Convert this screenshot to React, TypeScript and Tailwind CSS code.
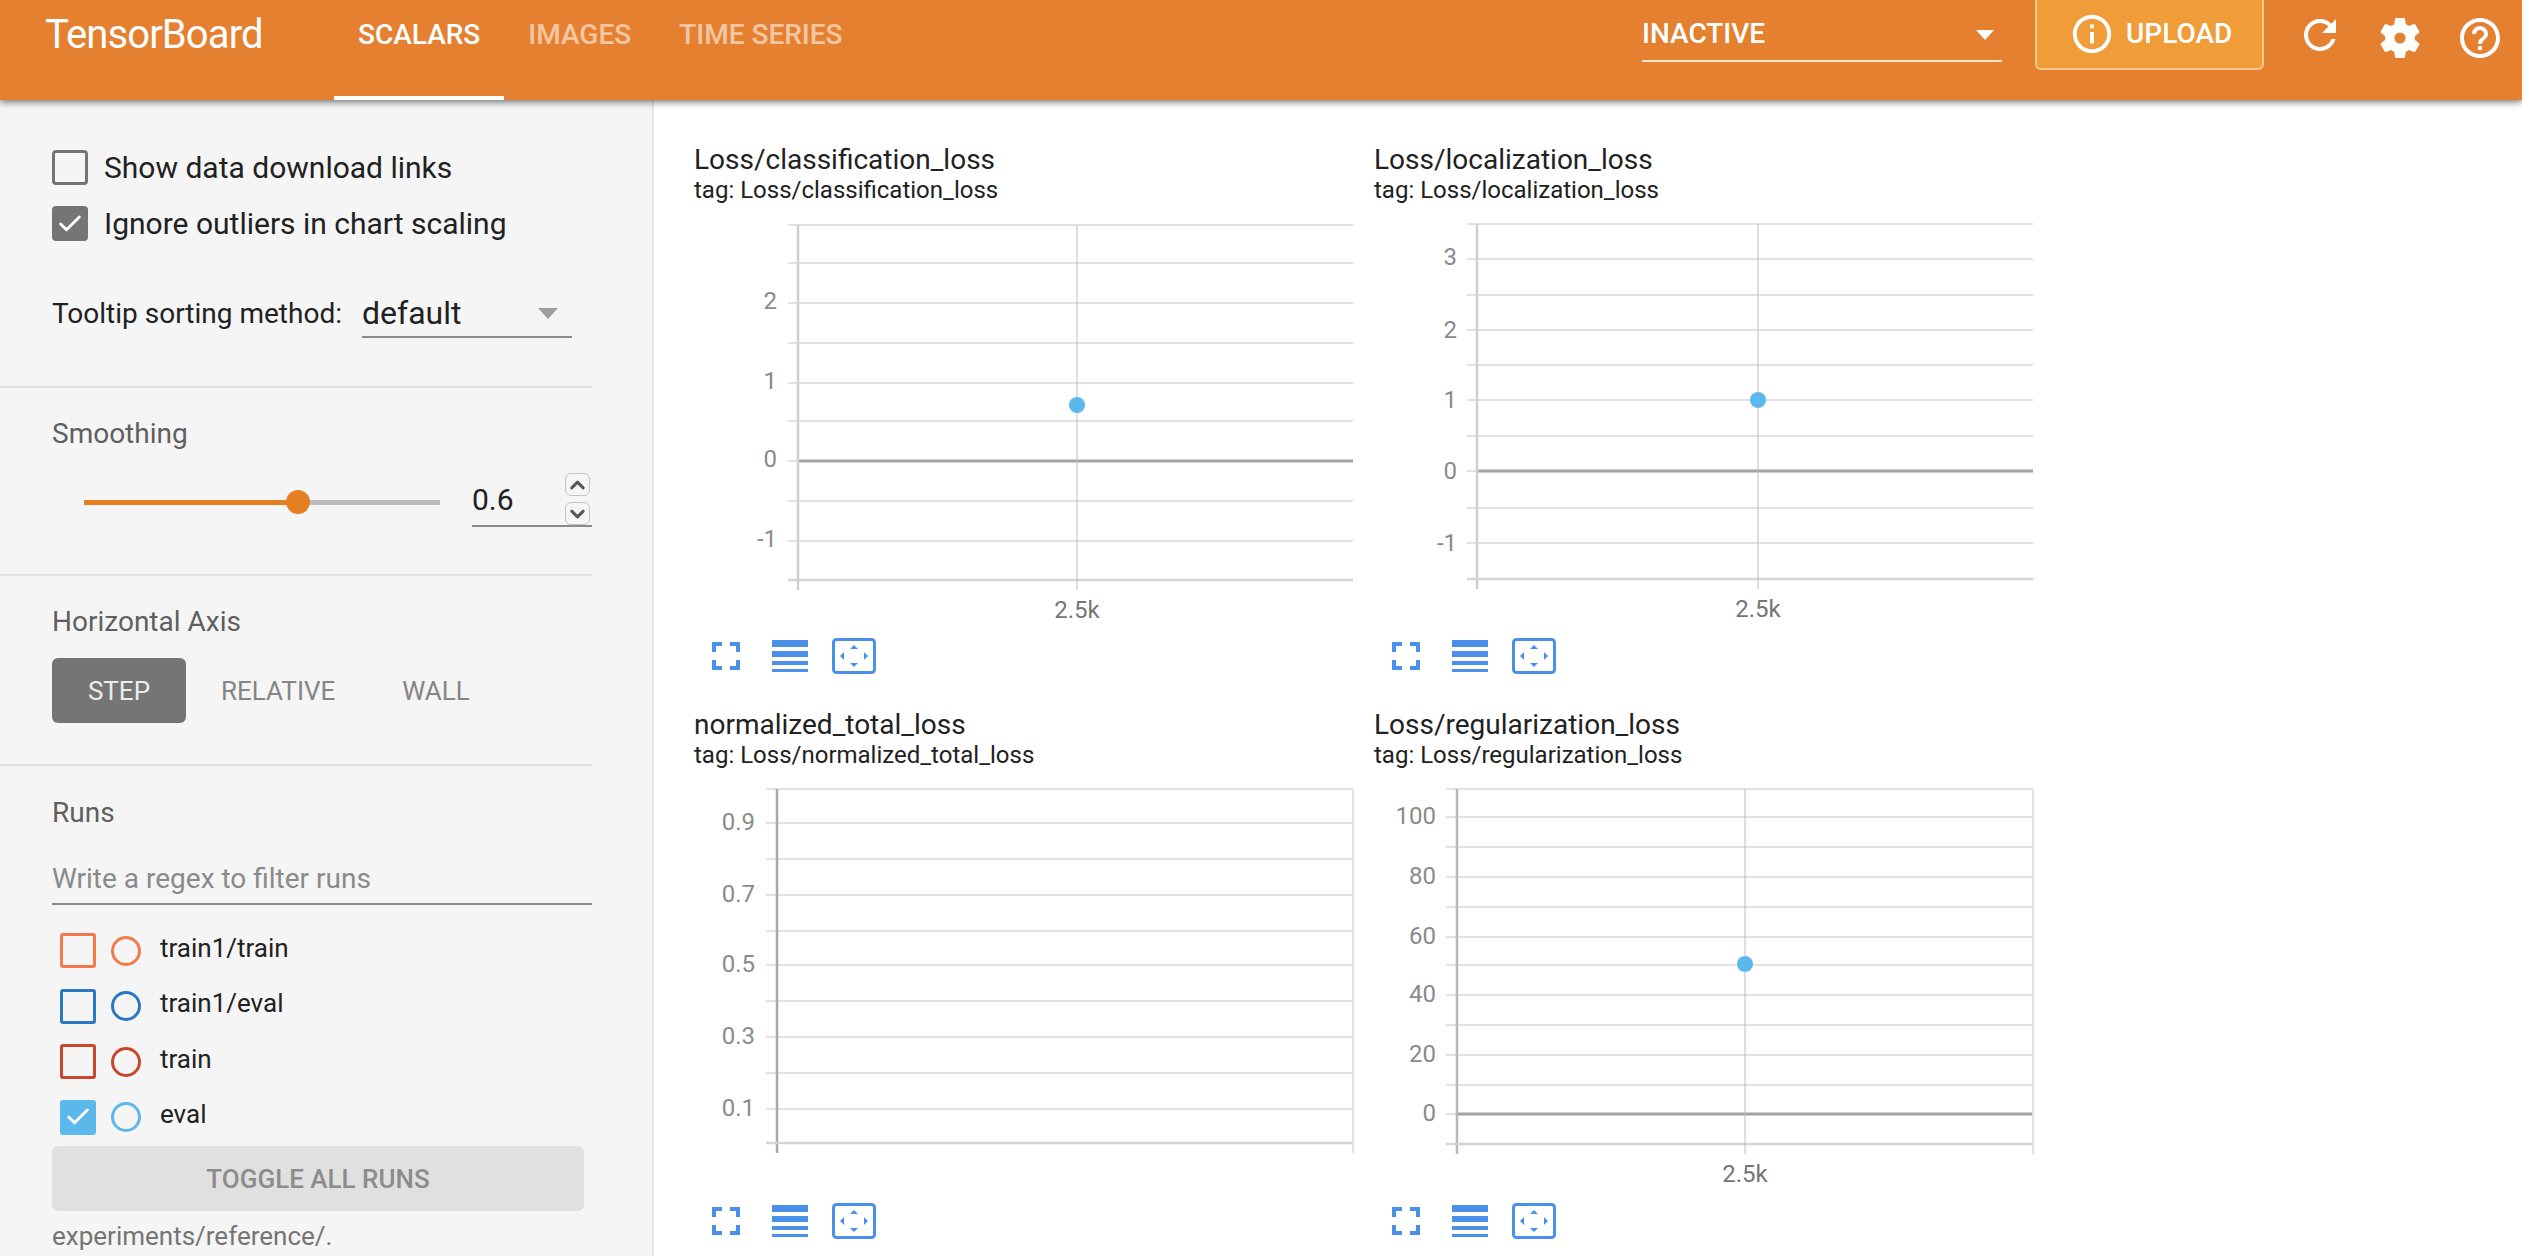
import { Check, ChevronDown, ChevronUp } from 'lucide-react'

const tabs = [
  { label: 'SCALARS', active: true },
  { label: 'IMAGES', active: false },
  { label: 'TIME SERIES', active: false },
]

const runs = [
  { name: 'train1/train', color: 'border-[#f4794b]', checked: false },
  { name: 'train1/eval', color: 'border-[#2a78c2]', checked: false },
  { name: 'train', color: 'border-[#c9462c]', checked: false },
  { name: 'eval', color: 'border-[#5bb8ea]', checked: true },
]

const charts = [
  {
    title: 'Loss/classification_loss',
    tag: 'tag: Loss/classification_loss',
    axis: 104,
    tick: 94,
    labelX: 83,
    labelOffset: 6,
    grid: [19, 57, 97, 137, 177, 215, 255, 295, 335, 374],
    zero: 255,
    labels: [['2', 97], ['1', 177], ['0', 255], ['-1', 335]],
    point: { x: 383, y: 199 },
    axisColor: '#cfcfcf',
    rightEdge: false,
  },
  {
    title: 'Loss/localization_loss',
    tag: 'tag: Loss/localization_loss',
    axis: 103,
    tick: 93,
    labelX: 83,
    labelOffset: 8,
    grid: [18, 53, 89, 124, 159, 194, 230, 265, 302, 337, 373],
    zero: 265,
    labels: [['3', 51], ['2', 124], ['1', 194], ['0', 265], ['-1', 337]],
    point: { x: 384, y: 194 },
    axisColor: '#cfcfcf',
    rightEdge: false,
  },
  {
    title: 'normalized_total_loss',
    tag: 'tag: Loss/normalized_total_loss',
    axis: 83,
    tick: 72,
    labelX: 61,
    labelOffset: 7,
    grid: [18, 52, 88, 124, 160, 194, 230, 266, 302, 338, 372],
    zero: null,
    labels: [['0.9', 52], ['0.7', 124], ['0.5', 194], ['0.3', 266], ['0.1', 338]],
    point: null,
    axisColor: '#a8a8a8',
    rightEdge: true,
  },
  {
    title: 'Loss/regularization_loss',
    tag: 'tag: Loss/regularization_loss',
    axis: 83,
    tick: 72,
    labelX: 62,
    labelOffset: 7,
    grid: [18, 46, 76, 106, 136, 166, 194, 224, 254, 284, 314, 343, 373],
    zero: 343,
    labels: [['100', 46], ['80', 106], ['60', 166], ['40', 224], ['20', 284], ['0', 343]],
    point: { x: 371, y: 193 },
    axisColor: '#b8b8b8',
    rightEdge: true,
  },
]

function MaterialIcon({ d, className, viewBox = '0 0 24 24' }: { d: string; className: string; viewBox?: string }) {
  return (
    <svg viewBox={viewBox} className={className} fill="currentColor">
      <path d={d} fillRule="evenodd" />
    </svg>
  )
}

function ChartPlot({ chart }: { chart: (typeof charts)[number] }) {
  const bottom = chart.grid[chart.grid.length - 1]
  const right = 659

  return (
    <svg width="680" height="426" viewBox="0 0 680 426" className="block">
      {chart.grid.map((y) =>
        y === chart.zero ? null : (
          <line key={y} x1={chart.tick} x2={right} y1={y} y2={y} stroke="#e2e2e2" strokeWidth="2" />
        ),
      )}
      {chart.zero !== null && (
        <>
          <line x1={chart.tick} x2={chart.axis} y1={chart.zero} y2={chart.zero} stroke="#e2e2e2" strokeWidth="2" />
          <line x1={chart.axis} x2={right} y1={chart.zero} y2={chart.zero} stroke="#a3a3a3" strokeWidth="3" />
        </>
      )}
      <line x1={chart.axis} x2={chart.axis} y1={chart.grid[0]} y2={bottom + 10} stroke={chart.axisColor} strokeWidth="2.5" />
      <line x1={chart.tick} x2={right} y1={bottom} y2={bottom} stroke="#d4d4d4" strokeWidth="2.5" />
      {chart.rightEdge && <line x1={right} x2={right} y1={chart.grid[0]} y2={bottom + 10} stroke="#e2e2e2" strokeWidth="2" />}
      {chart.point && (
        <>
          <line x1={chart.point.x} x2={chart.point.x} y1={chart.grid[0]} y2={bottom + 10} stroke="#bdbdbd" strokeWidth="1" />
          <circle cx={chart.point.x} cy={chart.point.y} r="8" fill="#5bb8ea" />
          <text x={chart.point.x} y={bottom + 38} textAnchor="middle" fontSize="24" fill="#757575">
            2.5k
          </text>
        </>
      )}
      {chart.labels.map(([label, y]) => (
        <text key={label} x={chart.labelX} y={Number(y) + chart.labelOffset} textAnchor="end" fontSize="24" fill="#8a8a8a">
          {label}
        </text>
      ))}
    </svg>
  )
}

function ChartActions() {
  return (
    <div className="flex h-9 items-center pl-[18px] text-[#4a90e8]">
      <MaterialIcon
        className="h-7 w-7"
        viewBox="5 5 14 14"
        d="M7 14H5v5h5v-2H7v-3zm-2-4h2V7h3V5H5v5zm12 7h-3v2h5v-5h-2v3zM14 5v2h3v3h2V5h-5z"
      />
      <div className="ml-8 flex h-8 w-9 flex-col justify-between">
        <div className="h-[7px] bg-current" />
        <div className="h-[6px] bg-current" />
        <div className="h-1 bg-current" />
        <div className="h-[3px] bg-current" />
      </div>
      <svg viewBox="0 0 44 36" className="ml-6 h-9 w-11" fill="currentColor">
        <rect x="1.5" y="1.5" width="41" height="33" rx="3" fill="none" stroke="currentColor" strokeWidth="3" />
        <path d="M22 7l4 4h-8zM22 29l4-4h-8zM8 18l4-4v8zM36 18l-4-4v8z" />
      </svg>
    </div>
  )
}

export default function App() {
  return (
    <div className="relative flex h-[1256px] flex-col overflow-hidden bg-white font-[Roboto,sans-serif]">
      <header className="relative z-10 flex h-[100px] shrink-0 items-start bg-[#e58030] text-white shadow-[0_2px_7px_rgba(0,0,0,0.55)]">
        <div className="ml-[45px] mt-[10px] w-[289px] text-[40px] leading-[50px] tracking-[-0.9px]">TensorBoard</div>
        <nav className="flex h-[100px]">
          {tabs.map((tab) => (
            <div
              key={tab.label}
              className={
                tab.active
                  ? 'border-b-4 border-white px-6 pt-[17px] text-[28px] font-medium leading-9'
                  : 'border-b-4 border-transparent px-6 pt-[17px] text-[28px] font-medium leading-9 text-white/55'
              }
            >
              {tab.label}
            </div>
          ))}
        </nav>
        <div className="ml-auto flex items-start">
          <div className="mt-[16px] flex h-[46px] w-[360px] items-start justify-between border-b-2 border-[#fbe6d2] pr-2 text-[28px] font-medium leading-9">
            <span>INACTIVE</span>
            <span className="mt-[14px] h-0 w-0 border-x-[9px] border-t-[10px] border-x-transparent border-t-white" />
          </div>
          <div className="ml-[33px] flex h-[70px] w-[229px] items-center rounded-b-md border-x-2 border-b-2 border-[#f8c88f] bg-[#f09c38] pl-[32px]">
            <MaterialIcon
              className="h-[46px] w-[46px]"
              d="M11 17h2v-6h-2v6zm1-15C6.48 2 2 6.48 2 12s4.48 10 10 10 10-4.48 10-10S17.52 2 12 2zm0 18c-4.41 0-8-3.59-8-8s3.59-8 8-8 8 3.59 8 8-3.59 8-8 8zM11 9h2V7h-2v2z"
            />
            <span className="ml-[11px] text-[28px] font-medium leading-9">UPLOAD</span>
          </div>
          <MaterialIcon
            className="ml-[32px] mt-[11px] h-12 w-12"
            d="M17.65 6.35C16.2 4.9 14.21 4 12 4c-4.42 0-7.99 3.58-7.99 8s3.57 8 7.99 8c3.73 0 6.84-2.55 7.73-6h-2.08c-.82 2.33-3.04 4-5.65 4-3.31 0-6-2.69-6-6s2.69-6 6-6c1.66 0 3.14.69 4.22 1.78L13 11h7V4l-2.35 2.35z"
          />
          <MaterialIcon
            className="ml-8 mt-[14px] h-12 w-12"
            d="M19.43 12.98c.04-.32.07-.64.07-.98s-.03-.66-.07-.98l2.11-1.65c.19-.15.24-.42.12-.64l-2-3.46c-.12-.22-.39-.3-.61-.22l-2.49 1c-.52-.4-1.08-.73-1.69-.98l-.38-2.65C14.46 2.18 14.25 2 14 2h-4c-.25 0-.46.18-.49.42l-.38 2.65c-.61.25-1.17.59-1.69.98l-2.49-1c-.23-.09-.49 0-.61.22l-2 3.46c-.13.22-.07.49.12.64l2.11 1.65c-.04.32-.07.65-.07.98s.03.66.07.98l-2.11 1.65c-.19.15-.24.42-.12.64l2 3.46c.12.22.39.3.61.22l2.49-1c.52.4 1.08.73 1.69.98l.38 2.65c.03.24.24.42.49.42h4c.25 0 .46-.18.49-.42l.38-2.65c.61-.25 1.17-.59 1.69-.98l2.49 1c.23.09.49 0 .61-.22l2-3.46c.12-.22.07-.49-.12-.64l-2.11-1.65zM12 14.8a2.8 2.8 0 1 1 0-5.6 2.8 2.8 0 0 1 0 5.6z"
          />
          <MaterialIcon
            className="ml-8 mr-[18px] mt-[14px] h-12 w-12"
            d="M11 18h2v-2h-2v2zm1-16C6.48 2 2 6.48 2 12s4.48 10 10 10 10-4.48 10-10S17.52 2 12 2zm0 18c-4.41 0-8-3.59-8-8s3.59-8 8-8 8 3.59 8 8-3.59 8-8 8zm0-14c-2.21 0-4 1.79-4 4h2c0-1.1.9-2 2-2s2 .9 2 2c0 2-3 1.75-3 5h2c0-2.25 3-2.5 3-5 0-2.21-1.79-4-4-4z"
          />
        </div>
      </header>

      <div className="flex min-h-0 flex-1">
        <aside className="w-[654px] shrink-0 border-r-2 border-[#e6e6e6] bg-[#f5f5f5]">
          <div className="w-[592px]">
            <section className="h-[288px] border-b-2 border-[#e0e0e0] pl-[52px] pt-[50px] text-[30px] text-[#212121]">
              <div className="flex h-[35px] items-center">
                <span className="h-[35px] w-[36px] rounded-[4px] border-[3px] border-[#757575]" />
                <span className="ml-[16px] leading-9">Show data download links</span>
              </div>
              <div className="mt-[21px] flex h-[35px] items-center">
                <span className="flex h-[35px] w-[36px] items-center justify-center rounded-[4px] bg-[#757575]">
                  <Check className="h-7 w-7 text-white" strokeWidth={2.5} />
                </span>
                <span className="ml-[16px] leading-9">Ignore outliers in chart scaling</span>
              </div>
              <div className="mt-[47px] flex items-start">
                <span className="w-[310px] pt-[8px] text-[28px] leading-9">Tooltip sorting method:</span>
                <div className="flex h-[50px] w-[210px] items-start justify-between border-b-2 border-[#8a8a8a] pr-[14px]">
                  <span className="pt-[2px] text-[32px] leading-[46px]">default</span>
                  <span className="mt-[20px] h-0 w-0 border-x-[10px] border-t-[11px] border-x-transparent border-t-[#9e9e9e]" />
                </div>
              </div>
            </section>

            <section className="h-[188px] border-b-2 border-[#e0e0e0] pl-[52px] pt-[26px]">
              <div className="text-[28px] leading-10 text-[#5f5f5f]">Smoothing</div>
              <div className="mt-[21px] flex items-end">
                <div className="relative mb-[22px] ml-[32px] flex h-[5px] w-[356px]">
                  <div className="w-[214px] bg-[#e67e22]" />
                  <div className="flex-1 bg-[#bdbdbd]" />
                  <div className="absolute left-[202px] top-[-10px] h-[24px] w-[24px] rounded-full bg-[#e67e22]" />
                </div>
                <div className="ml-[32px] flex h-[52px] w-[120px] items-start justify-between border-b-2 border-[#8a8a8a] pr-[2px]">
                  <span className="pt-[7px] text-[30px] leading-9 text-[#212121]">0.6</span>
                  <div className="-mt-[2px] flex flex-col gap-[6px]">
                    <span className="flex h-[23px] w-[25px] items-center justify-center rounded-[6px] border border-[#c4c4c4]">
                      <ChevronUp className="h-6 w-6 text-[#555]" strokeWidth={3} />
                    </span>
                    <span className="flex h-[23px] w-[25px] items-center justify-center rounded-[6px] border border-[#c4c4c4]">
                      <ChevronDown className="h-6 w-6 text-[#555]" strokeWidth={3} />
                    </span>
                  </div>
                </div>
              </div>
            </section>

            <section className="h-[190px] border-b-2 border-[#e0e0e0] pl-[52px] pt-[26px]">
              <div className="text-[28px] leading-10 text-[#5f5f5f]">Horizontal Axis</div>
              <div className="mt-[16px] flex items-center text-[26px]">
                <span className="flex h-[65px] w-[134px] items-center justify-center rounded-md bg-[#757575] pt-[2px] text-[#ececec]">STEP</span>
                <span className="ml-[35px] pt-[2px] text-[#858585]">RELATIVE</span>
                <span className="ml-[67px] pt-[2px] text-[#858585]">WALL</span>
              </div>
            </section>

            <section className="pl-[52px] pt-[27px]">
              <div className="text-[28px] leading-10 text-[#5f5f5f]">Runs</div>
              <div className="mt-[17px] h-[55px] border-b-2 border-[#8a8a8a] pt-[9px] text-[28px] leading-10 text-[#8a8a8a]">Write a regex to filter runs</div>
              <div className="mt-[28px] flex flex-col gap-[20.6px] pl-2">
                {runs.map((run) => (
                  <div key={run.name} className="flex h-[35px] items-center">
                    {run.checked ? (
                      <span className="flex h-[35px] w-[36px] items-center justify-center rounded-[3px] bg-[#5bb8ea]">
                        <Check className="h-7 w-7 text-white" strokeWidth={2.5} />
                      </span>
                    ) : (
                      <span className={`h-[35px] w-[36px] rounded-[3px] border-[3px] ${run.color}`} />
                    )}
                    <span className={`ml-[15px] h-[30px] w-[30px] rounded-full border-[3px] ${run.color}`} />
                    <span className="-mt-[6px] ml-[19px] text-[26px] leading-8 text-[#212121]">{run.name}</span>
                  </div>
                ))}
              </div>
              <div className="mt-[11px] flex h-[65px] w-[532px] items-center justify-center rounded-md bg-[#e0e0e0] pt-[2px] text-[26px] font-medium text-[#8c8c8c]">
                TOGGLE ALL RUNS
              </div>
              <div className="mt-[7px] text-[26px] leading-9 text-[#757575]">experiments/reference/.</div>
            </section>
          </div>
        </aside>

        <main className="flex-1 pl-[40px] pt-[44px]">
          <div className="grid w-[1360px] grid-cols-[680px_680px]">
            {charts.map((chart) => (
              <div key={chart.title} className="h-[565px]">
                <div className="text-[28px] leading-8 text-[#212121]">{chart.title}</div>
                <div className="pb-[2px] text-[24px] leading-7 text-[#212121]">{chart.tag}</div>
                <ChartPlot chart={chart} />
                <div className="mt-[6px]">
                  <ChartActions />
                </div>
              </div>
            ))}
          </div>
        </main>
      </div>

      {/* the reference is an upscaled capture, this softens everything under it */}
      <div className="pointer-events-none absolute inset-0 z-20 backdrop-blur-[0.7px]" />
    </div>
  )
}
